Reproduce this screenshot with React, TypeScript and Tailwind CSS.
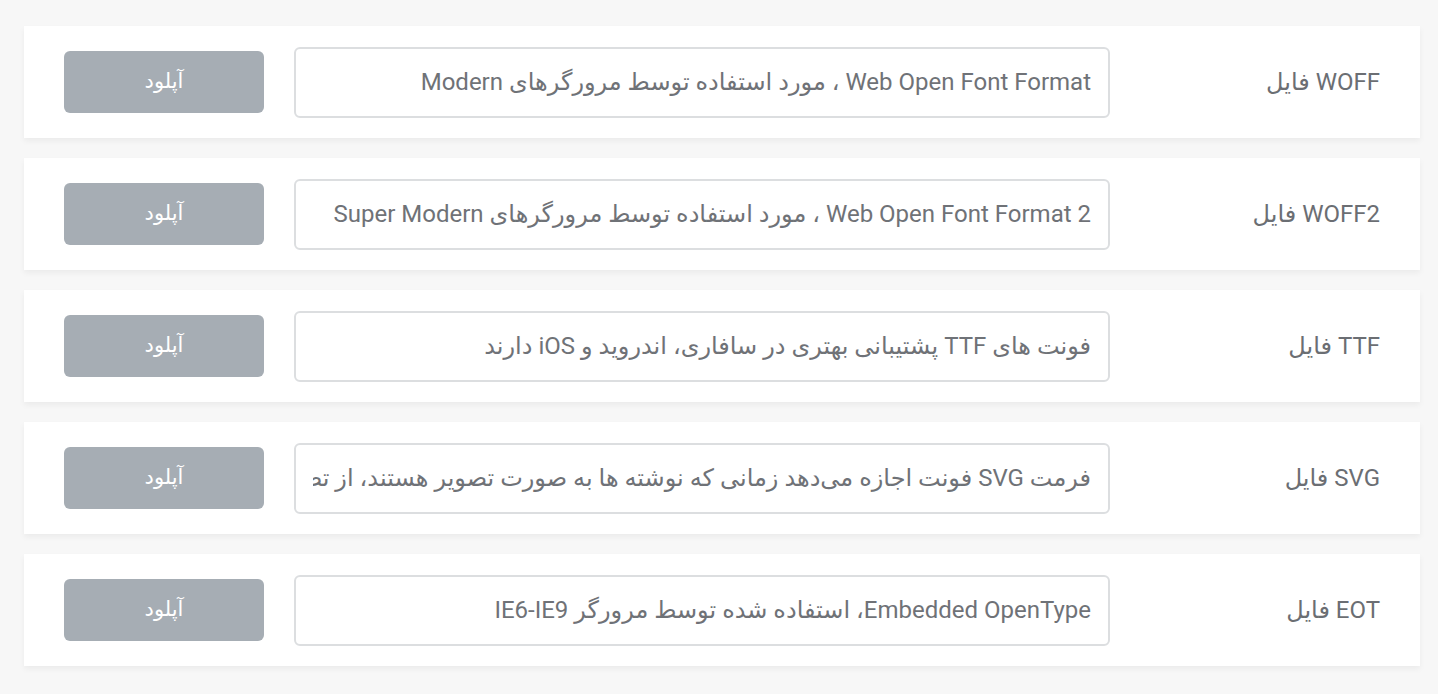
const rows = [
  { label: 'WOFF فایل', desc: 'Web Open Font Format ، مورد استفاده توسط مرورگرهای Modern' },
  { label: 'WOFF2 فایل', desc: 'Web Open Font Format 2 ، مورد استفاده توسط مرورگرهای Super Modern' },
  { label: 'TTF فایل', desc: 'فونت های TTF پشتیبانی بهتری در سافاری، اندروید و iOS دارند' },
  { label: 'SVG فایل', desc: 'فرمت SVG فونت اجازه می‌دهد زمانی که نوشته ها به صورت تصویر هستند، از تصاویر استفاده کنید' },
  { label: 'EOT فایل', desc: 'Embedded OpenType، استفاده شده توسط مرورگر IE6-IE9' },
]

function UploadRow({ label, desc }: { label: string; desc: string }) {
  return (
    <div className="flex items-center h-[112px] bg-white px-10 shadow-[0_3px_6px_rgba(0,0,0,0.05)]">
      <div className="w-[270px] shrink-0 text-[24px] text-[#6b6e73]">{label}</div>
      <input
        readOnly
        value={desc}
        className="w-[816px] h-[71px] shrink-0 rounded-md border-2 border-[#dcdee0] bg-white px-[17px] text-[24px] text-[#6f7277] outline-none"
      />
      <button className="mr-[30px] w-[200px] h-[62px] shrink-0 rounded-md bg-[#a6adb4] text-[21px] text-white">
        آپلود
      </button>
    </div>
  )
}

export default function App() {
  return (
    <div
      dir="rtl"
      className="min-h-screen bg-[#f7f7f7] pl-6 pr-[18px] pt-[26px] pb-[28px] flex flex-col gap-5"
      style={{ fontFamily: 'Roboto, "Noto Sans", "DejaVu Sans", sans-serif' }}
    >
      {rows.map((r) => (
        <UploadRow key={r.label} {...r} />
      ))}
    </div>
  )
}
